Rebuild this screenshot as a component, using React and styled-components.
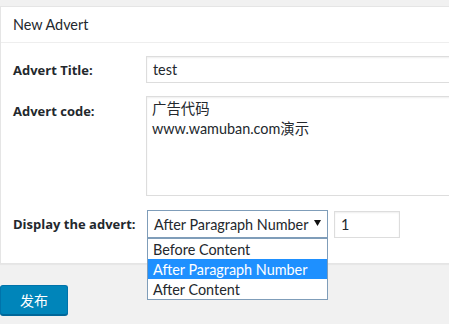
import React from 'react';
import styled, { createGlobalStyle } from 'styled-components';

const GlobalStyle = createGlobalStyle`
	html, body {
		margin: 0;
		padding: 0;
		background: #f1f1f1;
		font-family: 'Lato', 'Noto Sans CJK SC', sans-serif;
		color: #23282d;
	}
`;

const Page = styled.div`
	width: 449px;
	height: 324px;
	overflow: hidden;
	padding-top: 6px;
	box-sizing: border-box;
`;

const Panel = styled.div`
	width: 560px;
	background: #fff;
	border: 1px solid #e5e5e5;
	box-shadow: 0 1px 1px rgba(0, 0, 0, 0.04);
`;

const PanelHeader = styled.h2`
	margin: 0;
	height: 35px;
	padding: 0 12px;
	display: flex;
	align-items: center;
	font-size: 14.4px;
	font-weight: 400;
	border-bottom: 1px solid #eee;
`;

const Form = styled.div`
	display: grid;
	grid-template-columns: 133px 1fr;
	row-gap: 13px;
	padding: 13px 0 25px 12px;
`;

const Label = styled.label`
	font-family: 'Open Sans', sans-serif;
	font-size: 13px;
	font-weight: 700;
	display: flex;
	align-items: ${(p) => (p.$top ? 'flex-start' : 'center')};
	padding-top: ${(p) => (p.$top ? '6px' : '0')};
	margin-top: ${(p) => (p.$shift ? '1px' : '0')};
`;

const TextInput = styled.div`
	height: 27px;
	box-sizing: border-box;
	border: 1px solid #ddd;
	box-shadow: inset 0 1px 2px rgba(0, 0, 0, 0.07);
	padding: 0 6px;
	display: flex;
	align-items: center;
	font-size: 14.4px;
	width: ${(p) => p.$width || 'auto'};
`;

const TextArea = styled.div`
	height: 100px;
	box-sizing: border-box;
	border: 1px solid #ddd;
	box-shadow: inset 0 1px 2px rgba(0, 0, 0, 0.07);
	padding: 2px 5px;
	font-size: 14.4px;
	line-height: 20px;
`;

const SelectRow = styled.div`
	display: flex;
	align-items: center;
	gap: 6px;
	margin-top: 1px;
`;

const SelectWrap = styled.div`
	position: relative;
	margin-left: 1px;
`;

const Select = styled.div`
	width: 181px;
	height: 28px;
	box-sizing: border-box;
	border: 1px solid #7f9db9;
	padding: 0 6px;
	display: flex;
	align-items: center;
	justify-content: space-between;
	font-size: 14.4px;
	white-space: nowrap;
`;

const Arrow = styled.svg`
	flex-shrink: 0;
	width: 7px;
	height: 6px;
	margin-top: -2px;
`;

const ListBox = styled.div`
	position: absolute;
	top: 28px;
	left: 0;
	width: 181px;
	box-sizing: border-box;
	border: 1px solid #7f9db9;
	background: #fff;
	z-index: 2;
`;

const Option = styled.div`
	height: 20px;
	padding: 0 5px;
	display: flex;
	align-items: center;
	font-size: 14.4px;
	white-space: nowrap;
	background: ${(p) => (p.$active ? '#1e90ff' : '#fff')};
	color: ${(p) => (p.$active ? '#fff' : '#23282d')};
`;

const Button = styled.button`
	margin-top: 21px;
	width: 68px;
	height: 30px;
	border: 1px solid #0073aa;
	border-bottom-color: #006799;
	border-radius: 3px;
	background: #0085ba;
	color: #fff;
	font-family: 'Noto Sans CJK SC', sans-serif;
	font-size: 14px;
	box-shadow: 0 1px 0 #006799;
	padding: 0;
`;

const App = () => {
	return (
		<>
			<GlobalStyle />
			<Page>
				<Panel>
					<PanelHeader>New Advert</PanelHeader>
					<Form>
						<Label>Advert Title:</Label>
						<TextInput>test</TextInput>

						<Label $top>Advert code:</Label>
						<TextArea>
							广告代码
							<br />
							www.wamuban.com演示
						</TextArea>

						<Label $shift>Display the advert:</Label>
						<SelectRow>
							<SelectWrap>
								<Select>
									<span>After Paragraph Number</span>
									<Arrow viewBox="0 0 7 6">
										<path d="M0 0 H7 L3.5 6 Z" fill="#111" />
									</Arrow>
								</Select>
								<ListBox>
									<Option>Before Content</Option>
									<Option $active>After Paragraph Number</Option>
									<Option>After Content</Option>
								</ListBox>
							</SelectWrap>
							<TextInput $width="66px">1</TextInput>
						</SelectRow>
					</Form>
				</Panel>
				<Button>发布</Button>
			</Page>
		</>
	);
};

export default App;
